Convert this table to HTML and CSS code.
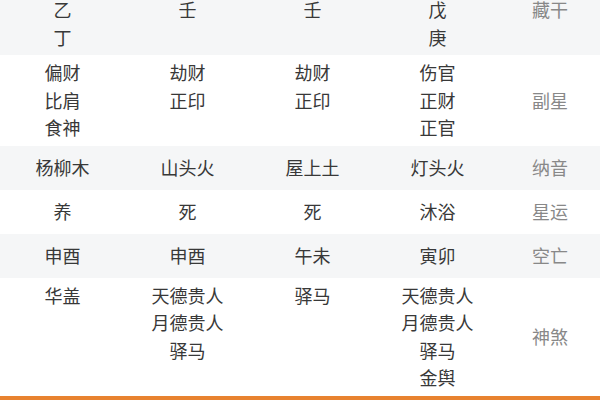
FILE: index.html
```html
<!DOCTYPE html>
<html lang="zh">
<head>
<meta charset="utf-8">
<link rel="stylesheet" href="styles.css">
</head>
<body>
<table class="bazi">
  <colgroup>
    <col class="c-data"><col class="c-data"><col class="c-data"><col class="c-data"><col class="c-label">
  </colgroup>
  <tr class="row gray">
    <td>乙<br>丁</td>
    <td>壬</td>
    <td>壬</td>
    <td>戊<br>庚</td>
    <td class="label top">藏干</td>
  </tr>
  <tr class="row">
    <td>偏财<br>比肩<br>食神</td>
    <td>劫财<br>正印</td>
    <td>劫财<br>正印</td>
    <td>伤官<br>正财<br>正官</td>
    <td class="label">副星</td>
  </tr>
  <tr class="row gray single">
    <td>杨柳木</td>
    <td>山头火</td>
    <td>屋上土</td>
    <td>灯头火</td>
    <td class="label">纳音</td>
  </tr>
  <tr class="row single">
    <td>养</td>
    <td>死</td>
    <td>死</td>
    <td>沐浴</td>
    <td class="label">星运</td>
  </tr>
  <tr class="row gray single">
    <td>申酉</td>
    <td>申酉</td>
    <td>午未</td>
    <td>寅卯</td>
    <td class="label">空亡</td>
  </tr>
  <tr class="row">
    <td>华盖</td>
    <td>天德贵人<br>月德贵人<br>驿马</td>
    <td>驿马</td>
    <td>天德贵人<br>月德贵人<br>驿马<br>金舆</td>
    <td class="label">神煞</td>
  </tr>
</table>
<div class="bar"></div>
</body>
</html>
```
FILE: styles.css
```css
html, body {
  margin: 0;
  padding: 0;
  background: #ffffff;
}
body {
  width: 600px;
  height: 400px;
  overflow: hidden;
  font-family: "Noto Sans CJK SC", "Noto Sans", sans-serif;
}
.bazi {
  width: 600px;
  margin-top: -8px;
  border-collapse: collapse;
  table-layout: fixed;
}
.c-data { width: 125px; }
.c-label { width: 100px; }
.row { height: 44px; }
.row.gray { background: #f5f6f7; }
.bazi td {
  padding: 4px 0;
  text-align: center;
  vertical-align: top;
  font-size: 18px;
  line-height: 27.5px;
  color: #383838;
}
.bazi .single td { vertical-align: middle; }
.bazi td.label {
  color: #888888;
  vertical-align: middle;
}
.bazi td.label.top { vertical-align: top; }
.bar {
  height: 6px;
  background: #e8822f;
}
```
